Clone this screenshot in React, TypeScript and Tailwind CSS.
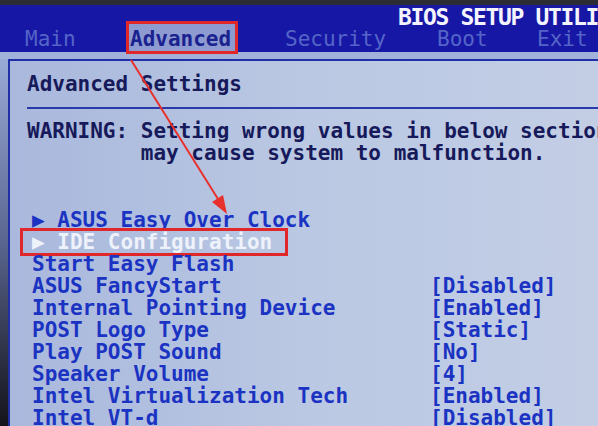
const mono = "font-['DejaVu_Sans_Mono','Liberation_Mono',monospace]";

const items: { label: string; value?: string; sub?: boolean; active?: boolean }[] = [
  { label: "ASUS Easy Over Clock", sub: true },
  { label: "IDE Configuration", sub: true, active: true },
  { label: "Start Easy Flash" },
  { label: "ASUS FancyStart", value: "[Disabled]" },
  { label: "Internal Pointing Device", value: "[Enabled]" },
  { label: "POST Logo Type", value: "[Static]" },
  { label: "Play POST Sound", value: "[No]" },
  { label: "Speaker Volume", value: "[4]" },
  { label: "Intel Virtualization Tech", value: "[Enabled]" },
  { label: "Intel VT-d", value: "[Disabled]" },
];

function Row({ item }: { item: (typeof items)[number] }) {
  const text = item.sub ? `\u25B6 ${item.label}` : item.label;
  return (
    <div className="flex h-[22px] whitespace-pre">
      <span className={`relative w-[398px] shrink-0 ${item.active ? "text-[#eef2fa]" : ""}`}>
        {item.active && (
          <span className="absolute -left-[12px] -top-[3px] h-[28px] w-[268px] border-[3px] border-[#e0282a]" />
        )}
        {text}
      </span>
      {item.value && <span>{item.value}</span>}
    </div>
  );
}

export default function App() {
  return (
    <div className={`relative flex h-[426px] w-[598px] flex-col overflow-hidden bg-[#1c1c24] text-[21px] font-bold leading-[22px] ${mono}`}>
      <div className="h-[5px] shrink-0 bg-[#2c2c34]" />

      <header className="h-[47px] shrink-0 bg-[#1717a6] pt-[2px]">
        <div className="h-[21px] whitespace-nowrap pl-[398px] text-[23px] leading-[21px] tracking-[-1.35px] text-[#f4f4ff]">
          BIOS SETUP UTILITY
        </div>
        <div className="grid h-[22px] grid-cols-[105px_155px_152px_100px_1fr] whitespace-nowrap pl-[25px] font-normal text-[#5565c6]">
          <span>Main</span>
          <span>
            <span className="relative font-bold text-[#1a2290]">
              <span className="absolute -bottom-[3px] -left-[4px] -right-[7px] -top-[6px] border-[3px] border-[#e0282a] bg-[#8e9bd0]" />
              <span className="relative">Advanced</span>
            </span>
          </span>
          <span>Security</span>
          <span>Boot</span>
          <span>Exit</span>
        </div>
      </header>

      <div className="flex min-h-0 flex-1 flex-col bg-[#a2b1da] pt-[7px]">
        <div className="flex min-h-0 flex-1">
          <div className="w-[8px] shrink-0 bg-linear-to-b from-[#9aaad6] via-[#5a6690] to-[#14141c]" />
          <div className="min-w-0 flex-1 overflow-hidden border-l-2 border-t-2 border-[#1f2fa8] bg-linear-to-r from-[#a9b8dc] via-[#bac8e3] to-[#c3cee5]">
            <div className="whitespace-nowrap pl-[17px] pt-[12px] text-[#16195a]">Advanced Settings</div>
            <div className="ml-[17px] mt-[12px] h-[2px] bg-[#2a3aaa]" />
            <div className="mt-[11px] whitespace-pre pl-[17px] text-[#16195a]">
              <div>WARNING: Setting wrong values in below sections</div>
              <div>{"         may cause system to malfunction."}</div>
            </div>
            <div className="mt-[45px] pl-[22px] text-[#1b33c2]">
              {items.map((item) => (
                <Row key={item.label} item={item} />
              ))}
            </div>
          </div>
        </div>
      </div>

      <svg className="pointer-events-none absolute left-0 top-0" width="598" height="426">
        <line x1="131" y1="60" x2="218" y2="199" stroke="#e8302c" strokeWidth="2" />
        <polygon points="227,214 223,195 212,202" fill="#e8302c" />
      </svg>
    </div>
  );
}
